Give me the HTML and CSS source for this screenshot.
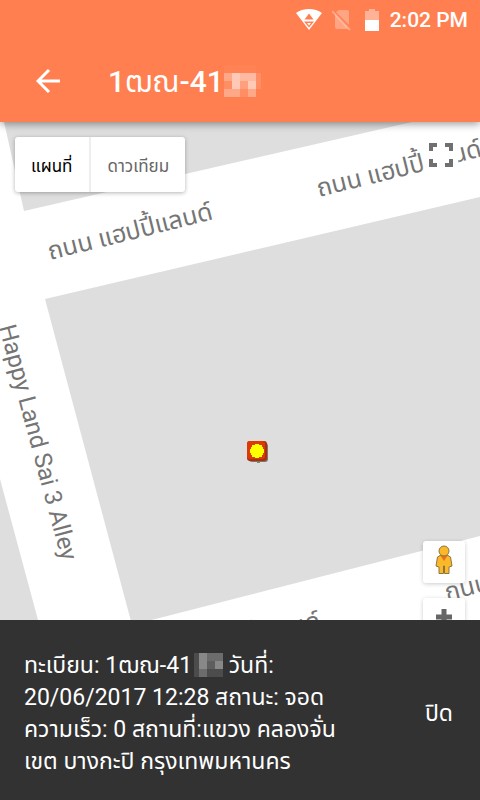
FILE: index.html
```html
<!DOCTYPE html>
<html lang="th">
<head>
<meta charset="utf-8">
<meta name="viewport" content="width=device-width, initial-scale=1">
<title>1ฒณ-41</title>
<link rel="stylesheet" href="styles.css">
</head>
<body>
<header class="top">
  <div class="status">
    <svg class="status-wifi" viewBox="0 0 26 22" aria-hidden="true"><path fill="#fff" fill-rule="evenodd" d="M0 4C7-1.300 19-1.300 26 4L13 21ZM13 4.500L8.500 10.500H17.500ZM8 12.500L13 18.500L18 12.500ZM11 14H15L13 16.500Z"/></svg>
    <svg class="status-sim" viewBox="0 0 20 22" aria-hidden="true"><path fill="#fff" fill-opacity=".3" d="M7 1H15Q17 1 17 3V16L4 3ZM3 5L16 19Q16 20 15 20H5Q3 20 3 18Z"/><path stroke="#fff" stroke-opacity=".3" stroke-width="2" d="M0 2L18 21"/></svg>
    <svg class="status-battery" viewBox="0 0 14 22" aria-hidden="true"><path fill="#fff" fill-opacity=".4" d="M0 2H4V0H10V2H14V11H0Z"/><path fill="#fff" d="M0 11H14V22H0Z"/></svg>
    <span>2:02 PM</span>
  </div>
  <div class="bar">
    <button class="back" aria-label="กลับ"><svg viewBox="0 0 24 24"><path fill="none" stroke="#fff" stroke-width="3" d="M24 12H2M13 1L2 12L13 23"/></svg></button>
    <h1>1<span class="thin">ฒณ</span>-41</h1>
    <svg class="title-mask" viewBox="0 0 38 32" aria-hidden="true">
      <g fill="#fff"><path fill-opacity=".03" d="M0 0h32v8H0z"/><path fill-opacity=".32" d="M0 8h8v8H0zM0 24h16v8H0zM24 24h8v8h-8z"/><path fill-opacity=".58" d="M8 8h8v16H8zM24 16h8v8h-8z"/><path fill-opacity=".46" d="M16 8h8v8h-8zM24 8h8v8h-8z"/><path fill-opacity=".25" d="M16 16h8v8h-8z"/><path fill-opacity=".12" d="M0 16h8v8H0zM16 24h8v8h-8zM32 8h5v16h-5z"/></g>
    </svg>
  </div>
</header>
<main class="map">
  <svg class="map-art" viewBox="0 0 480 498" preserveAspectRatio="xMinYMin slice">
    <g fill="#dedede"><path d="M4 0L24 89L412 0Z"/><path d="M45 177L480 75V414L132 503Z"/><path d="M0 357L38 498H0Z"/></g>
    <g class="road">
      <g class="road-thai">
        <text transform="translate(50 138) rotate(-14)">ถนน แฮปปี้แลนด์</text>
        <text transform="translate(319 75) rotate(-14)">ถนน แฮปปี้แลนด์</text>
        <text transform="translate(158 547) rotate(-14)">ถนน แฮปปี้แลนด์</text>
        <text transform="translate(447 479) rotate(-14)">ถนน แฮปปี้แลนด์</text>
      </g>
      <text transform="translate(-1 205) rotate(75)">Happy Land Sai 3 Alley</text>
    </g>
    <g transform="translate(247 319)">
      <rect x="2" y="2" width="19" height="19" rx="3" fill="#777"/><rect width="20" height="20" rx="3" fill="#a8300f"/><rect width="18" height="18" rx="3" fill="#dd3905"/>
      <path fill="#ff0" d="M8 3h4v1h3v2h1v2h1v4h-1v2h-1v2h-3v1H8v-1H5v-2H4v-2H3V8h1V6h1V4h3z"/><path stroke="#6a9a6a" d="M10 21.500h3"/>
    </g>
  </svg>
  <div class="types"><button class="chosen">แผนที่</button><button>ดาวเทียม</button></div>
  <button class="full" aria-label="เต็มจอ"><svg viewBox="0 0 24 24"><path fill="none" stroke="#707070" stroke-width="4" d="M2 8V2H8M16 2H22V8M22 16V22H16M8 22H2V16"/></svg></button>
  <div class="tools">
    <button class="tool" aria-label="สตรีทวิว"><svg class="peg" viewBox="0 0 18 30"><path fill="#fbb829" stroke="#8b7444" d="M5 10.500L2.500 12L1 21L4 22V28.500H8.500V21H9.500V28.500H14V22L17 21L15.500 12L13 10.500Z"/><path fill="#e8711c" d="M5 10H13L9 16Z"/><circle cx="9" cy="6" r="5" fill="#fbb829" stroke="#8b7444"/></svg></button>
    <button class="tool" aria-label="ซูมเข้า"><svg class="plus" viewBox="0 0 16 16"><path stroke="#666" stroke-width="5" d="M8 0V16M0 8H16"/></svg></button>
  </div>
</main>
<section class="snack" role="status">
  <p>ทะเบียน: 1ฒณ-41<svg class="snack-mask" viewBox="0 0 29 24" aria-hidden="true"><path fill="#4c4c4c" d="M0 0h29v24H0z"/><path fill="#888" d="M5 0h8v16H5zM21 8h8v8h-8z"/><path fill="#6c6c6c" d="M13 0h16v8H13zM5 16h8v8H5z"/><path fill="#5e5e5e" d="M13 8h8v8h-8z"/></svg> วันที่:<br>20/06/2017 12:28 สถานะ: จอด<br>ความเร็ว: 0 สถานที่:แขวง คลองจั่น<br>เขต บางกะปิ กรุงเทพมหานคร</p>
  <button class="close">ปิด</button>
</section>
</body>
</html>
```
FILE: styles.css
```css
* { box-sizing: border-box; }
body { margin: 0; min-height: 100vh; display: flex; flex-direction: column; font-family: Roboto, "Noto Sans Thai", "Noto Sans", sans-serif; }
button { border: 0; padding: 0; background: none; color: inherit; font: inherit; }
svg { display: block; }
.top { position: relative; z-index: 1; background: #ff7f50; color: #fff; box-shadow: 0 2px 8px rgba(0, 0, 0, .4); }
.status { height: 40px; padding-right: 12px; display: flex; align-items: center; justify-content: flex-end; font-size: 21px; font-weight: 500; }
.status-wifi { width: 26px; height: 22px; margin-right: 10px; }
.status-sim { width: 20px; height: 22px; margin-right: 13px; }
.status-battery { width: 14px; height: 22px; margin-right: 11px; }
.bar { height: 82px; padding: 0 36px; display: flex; align-items: center; }
.back { width: 24px; height: 24px; margin-right: 48px; }
.back svg { width: 24px; height: 24px; }
h1 { margin: 0; padding-top: 2px; font-size: 30px; font-weight: 500; line-height: 34px; }
.thin { font-weight: 400; }
.title-mask { width: 38px; height: 32px; }
.map { position: relative; flex: 1; overflow: hidden; background: #fff; }
.map-art { position: absolute; width: 100%; height: 100%; }
.road { font-size: 24px; fill: #757575; }
.road-thai { font-size: 25px; }
.types { position: absolute; left: 15px; top: 15px; display: flex; box-shadow: 0 1px 4px rgba(0, 0, 0, .3); border-radius: 3px; background: #fff; }
.types button { height: 55px; padding: 4px 16px 0; font-size: 17px; color: #666; }
.types .chosen { padding-right: 17px; color: #000; border-right: 2px solid #eee; }
.full { position: absolute; right: 22px; top: 15px; padding: 6px 5px; background: #fff; box-shadow: 0 0 3px #fff; }
.full svg { width: 24px; height: 24px; }
.tools { position: absolute; right: 15px; bottom: -20px; display: grid; gap: 15px; }
.tool { width: 42px; height: 42px; display: grid; place-items: center; background: #fff; border-radius: 3px; box-shadow: 0 1px 4px rgba(0, 0, 0, .2); }
.peg { width: 18px; height: 30px; margin-bottom: 4px; }
.plus { width: 16px; height: 16px; margin-bottom: 4px; }
.snack { min-height: 180px; padding: 8px 27px 0 24px; background: #323232; color: #fff; display: flex; align-items: center; justify-content: space-between; font-size: 23px; line-height: 32px; }
p { margin: 0; white-space: nowrap; }
.snack-mask { display: inline-block; width: 29px; height: 24px; margin-left: 2px; vertical-align: -4px; }
```
